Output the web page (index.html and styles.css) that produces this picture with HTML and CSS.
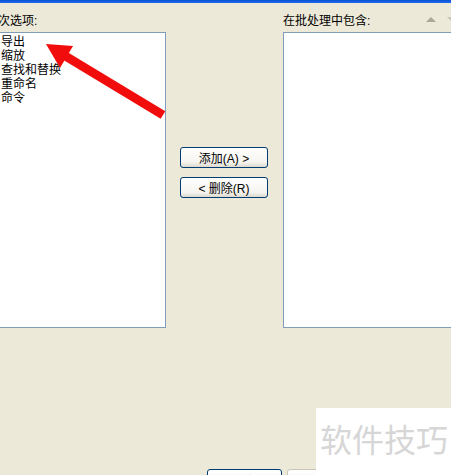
FILE: index.html
```html
<!DOCTYPE html>
<html lang="zh-CN">
<head>
    <meta charset="UTF-8">
    <meta name="viewport" content="width=device-width, initial-scale=1.0">
    <title>批处理</title>
    <link rel="stylesheet" href="styles.css">
</head>
<body>
    <div class="title-strip"></div>
    <div class="panes">
        <div class="pane pane-left">
            <div class="pane-label">批次选项:</div>
            <ul class="listbox">
                <li>导出</li>
                <li>缩放</li>
                <li>查找和替换</li>
                <li>重命名</li>
                <li>命令</li>
            </ul>
        </div>
        <div class="actions">
            <button class="xp-btn">添加(A) &gt;</button>
            <button class="xp-btn">&lt; 删除(R)</button>
        </div>
        <div class="pane pane-right">
            <div class="pane-head">
                <span class="pane-label">在批处理中包含:</span>
                <span class="order">
                    <svg width="10" height="5" viewBox="0 0 10 5"><polygon points="0,5 5,0 10,5" fill="#aca899"/></svg>
                    <svg width="10" height="5" viewBox="0 0 10 5"><polygon points="0,0 5,5 10,0" fill="#c9c6b8"/></svg>
                </span>
            </div>
            <ul class="listbox"></ul>
        </div>
    </div>
    <div class="footer">
        <button class="xp-btn footer-btn">确定</button>
        <button class="xp-btn footer-btn plain">取消</button>
    </div>
    <div class="watermark">软件技巧</div>
    <svg class="arrow" width="451" height="475" viewBox="0 0 451 475">
        <line x1="163" y1="115" x2="62" y2="54" stroke="#f20d0d" stroke-width="9"/>
        <polygon points="46,44 73,46 60,68" fill="#f20d0d"/>
    </svg>
</body>
</html>
```

FILE: styles.css
```css
html, body {
    margin: 0;
    padding: 0;
}
body {
    width: 451px;
    height: 475px;
    overflow: hidden;
    position: relative;
    background-color: #ece9d8;
    font-family: "Liberation Sans", "Noto Sans CJK SC", sans-serif;
    font-size: 12px;
    color: #000;
}
.title-strip {
    height: 3px;
    background: linear-gradient(#0a4fd0, #1c6cf0);
}
.panes {
    display: flex;
    align-items: flex-start;
    padding-top: 11px;
}
.pane {
    display: flex;
    flex-direction: column;
    flex-shrink: 0;
}
.pane-left {
    width: 178px;
    margin-left: -12px;
}
.pane-left .pane-label {
    margin-left: -2px;
}
.pane-right {
    width: 190px;
    margin-left: 15px;
}
.pane-label {
    line-height: 14px;
    white-space: nowrap;
}
.pane-head {
    display: flex;
    align-items: flex-start;
    height: 14px;
}
.order {
    display: flex;
    gap: 11px;
    margin-left: auto;
    margin-right: 16px;
    padding-top: 3px;
}
.listbox {
    list-style: none;
    margin: 4px 0 0;
    padding: 2px 0 0 12px;
    height: 296px;
    box-sizing: border-box;
    background-color: #fff;
    border: 1px solid #7f9db9;
}
.listbox li {
    line-height: 14px;
    height: 14px;
    white-space: nowrap;
}
.actions {
    display: flex;
    flex-direction: column;
    gap: 9px;
    margin-left: 14px;
    margin-top: 133px;
    flex-shrink: 0;
}
.xp-btn {
    width: 88px;
    height: 21px;
    padding: 0;
    font-family: inherit;
    font-size: 12px;
    color: #000;
    border: 1px solid #003c74;
    border-radius: 3px;
    background: linear-gradient(#ffffff, #f5f4ef 75%, #dcd8cc);
}
.footer {
    display: flex;
    gap: 5px;
    padding-left: 207px;
    margin-top: 141px;
}
.footer-btn {
    width: 75px;
    height: 23px;
}
.footer-btn.plain {
    border-color: #c9c6b8;
}
.watermark {
    position: absolute;
    right: 0;
    bottom: 0;
    width: 135px;
    height: 67px;
    box-sizing: border-box;
    padding: 10px 0 0 4px;
    background-color: #fff;
    color: #d6d6d6;
    font-family: "Noto Sans CJK SC", sans-serif;
    font-size: 32px;
    line-height: 40px;
    white-space: nowrap;
}
.arrow {
    position: absolute;
    left: 0;
    top: 0;
    pointer-events: none;
}
```
